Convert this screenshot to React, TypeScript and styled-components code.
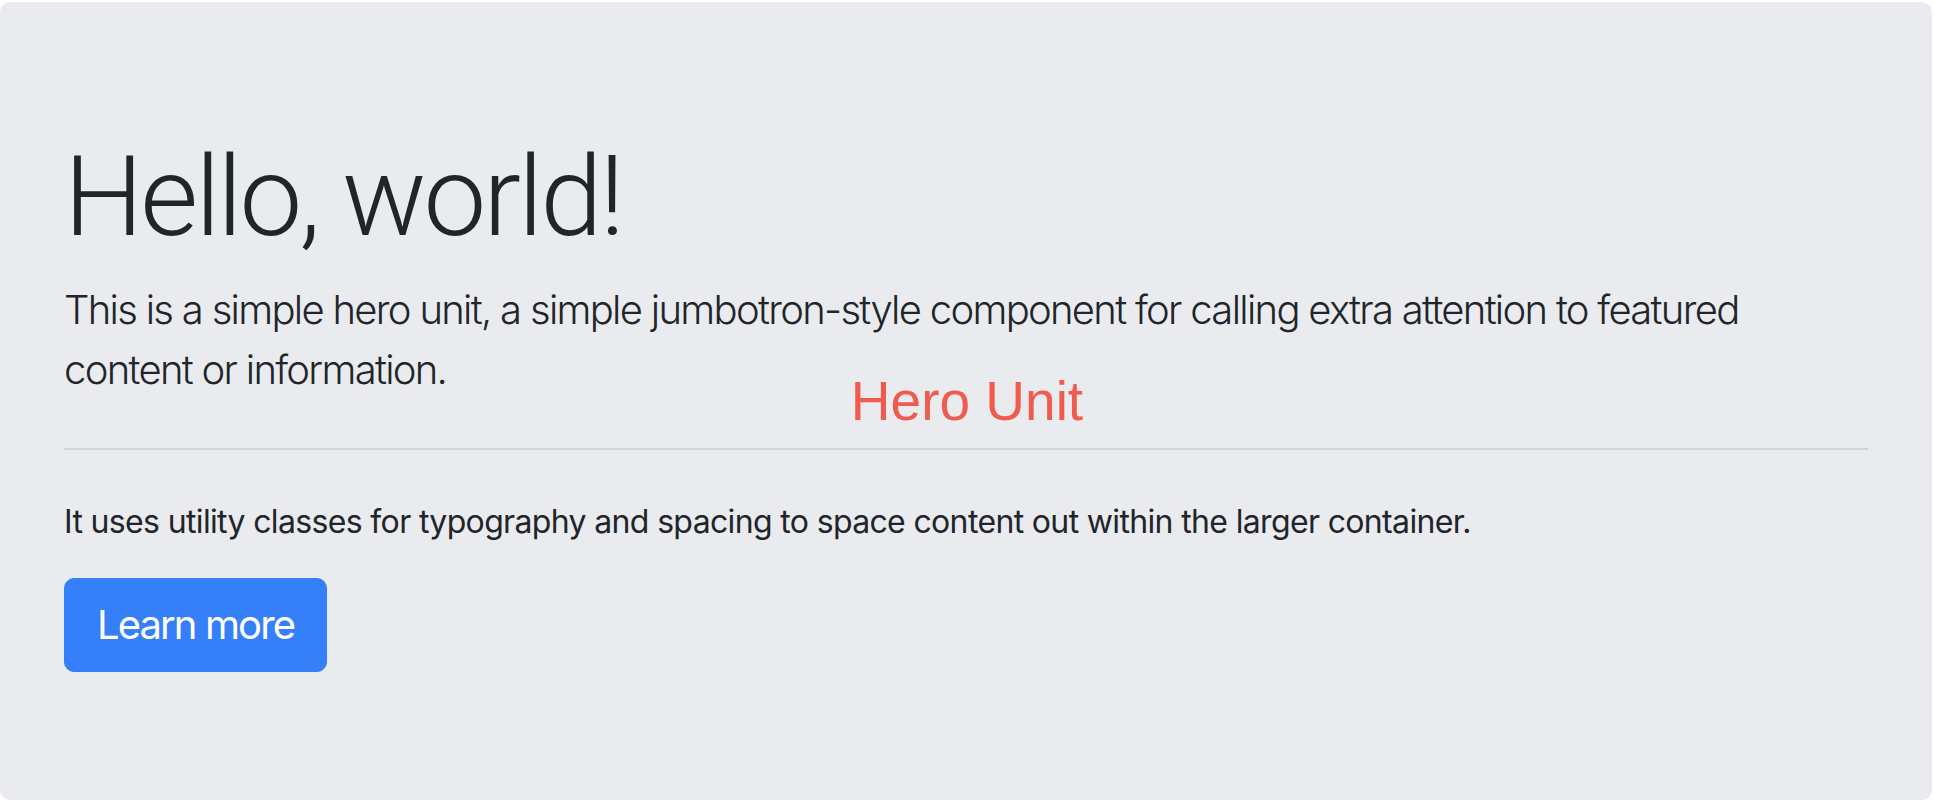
import React from "react";
import styled, { createGlobalStyle } from "styled-components";

const GlobalStyle = createGlobalStyle`
  html, body {
    margin: 0;
    padding: 0;
    background: #ffffff;
  }
  body {
    font-family: Inter, "Noto Sans", sans-serif;
    color: #212529;
  }
  * { box-sizing: border-box; }
`;

const Page = styled.div`
  position: relative;
  width: 1934px;
  height: 804px;
  padding: 2px 2px 0 0;
`;

const Jumbotron = styled.section`
  background: #e9ebef;
  border-radius: 10px;
  padding: 128px 64px;
  display: flex;
  flex-direction: column;
  align-items: flex-start;
`;

const Display = styled.h1`
  margin: 0 0 16px;
  font-family: Roboto, Inter, "Noto Sans", sans-serif;
  font-weight: 300;
  font-size: 112px;
  line-height: 134.4px;
  letter-spacing: -3px;
  color: #212529;
`;

const Lead = styled.p`
  margin: 0;
  font-weight: 300;
  font-size: 40px;
  line-height: 60px;
  letter-spacing: -1.7px;
  color: #212529;
`;

const Rule = styled.hr`
  align-self: stretch;
  margin: 48px 0;
  border: 0;
  border-top: 2px solid rgba(0, 0, 0, 0.1);
`;

const Body = styled.p`
  margin: 0 0 32px;
  font-size: 32px;
  line-height: 48px;
  letter-spacing: -0.65px;
  color: #212529;
`;

const Button = styled.a`
  display: inline-block;
  padding: 16px 32px;
  border: 1px solid #3580f8;
  border-radius: 10px;
  background: #3580f8;
  color: #ffffff;
  font-size: 40px;
  line-height: 60px;
  letter-spacing: -1.9px;
  text-decoration: none;
  cursor: pointer;
`;

const Annotation = styled.div`
  position: absolute;
  left: 0;
  right: 0;
  top: 374px;
  text-align: center;
  font-family: "Liberation Sans", Arial, sans-serif;
  font-size: 55px;
  line-height: 55px;
  color: #ef5b4c;
  pointer-events: none;
`;

export default function App() {
  return (
    <>
      <GlobalStyle />
      <Page>
        <Jumbotron>
          <Display>Hello, world!</Display>
          <Lead>
            This is a simple hero unit, a simple jumbotron-style component for calling extra attention to featured
            content or information.
          </Lead>
          <Rule />
          <Body>It uses utility classes for typography and spacing to space content out within the larger container.</Body>
          <Button href="#" role="button">Learn more</Button>
        </Jumbotron>
        <Annotation>Hero Unit</Annotation>
      </Page>
    </>
  );
}
